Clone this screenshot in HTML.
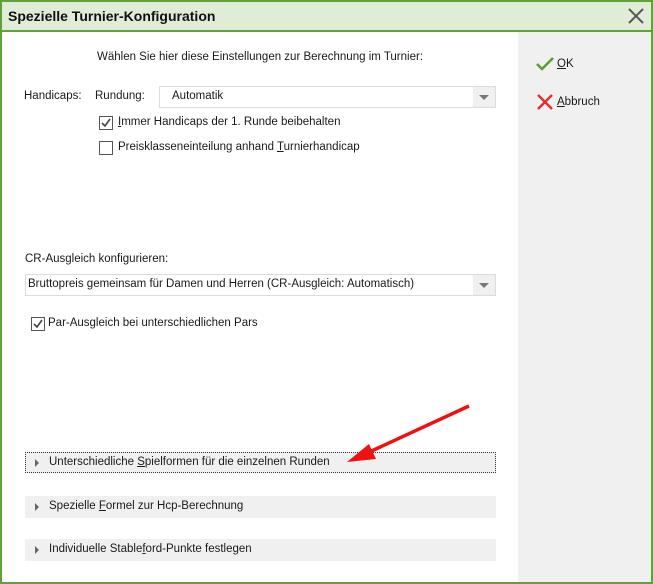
<!DOCTYPE html>
<html><head><meta charset="utf-8"><style>
*{margin:0;padding:0;box-sizing:border-box}
body{width:653px;height:584px;overflow:hidden;background:#fff;font-family:"Liberation Sans",sans-serif;font-size:11.5px;color:#1a1a1a;position:relative}
.frame{position:absolute;left:0;top:0;width:653px;height:584px;border:2px solid #5fa23a}
.title{position:absolute;left:2px;top:2px;width:649px;height:30px;background:#dfedd6;border-bottom:2px solid #5fa23a}
.title span{position:absolute;left:6px;top:6px;font-weight:bold;font-size:14px;color:#111}
.side{position:absolute;left:518px;top:32px;width:133px;height:550px;background:#f0f0f0}
.a{position:absolute;white-space:nowrap}
.combo{position:absolute;height:22px;border:1px solid #dcdcdc;background:#fff}
.combo span{position:absolute;left:12px;top:4px}
.combo i{position:absolute;right:0;top:0;width:22px;height:20px;background:#f0f0f0}
.combo i:after{content:"";position:absolute;left:6px;top:8px;border-left:5px solid transparent;border-right:5px solid transparent;border-top:5px solid #777}
.cb{position:absolute;width:14px;height:14px;border:1px solid #555;background:#fff}
.exp{position:absolute;left:25px;width:471px;height:22px;background:#f0f0f0}
.exp b{position:absolute;left:10px;top:7px;border-top:4px solid transparent;border-bottom:4px solid transparent;border-left:4px solid #666}
.exp span{position:absolute;left:24px;top:4px}
u{text-decoration:underline}
</style></head><body>
<div class="frame"></div>
<div class="title"><span>Spezielle Turnier-Konfiguration</span>
<svg style="position:absolute;left:625px;top:5px" width="18" height="18"><path d="M2 2L16 16M16 2L2 16" stroke="#555" stroke-width="2"/></svg></div>
<div class="side"></div>
<svg style="position:absolute;left:536px;top:57px" width="18" height="14"><path d="M1 7L6 12L17 1" stroke="#5a9e2f" stroke-width="2.5" fill="none"/></svg>
<div class="a" style="left:557px;top:58px"><u>O</u>K</div>
<svg style="position:absolute;left:537px;top:94px" width="16" height="16"><path d="M1 1L15 15M15 1L1 15" stroke="#e23030" stroke-width="2.5"/></svg>
<div class="a" style="left:557px;top:96px"><u>A</u>bbruch</div>

<div class="a" style="left:97px;top:51px">Wählen Sie hier diese Einstellungen zur Berechnung im Turnier:</div>
<div class="a" style="left:24px;top:90px">Handicaps:</div>
<div class="a" style="left:95px;top:90px">Rundung:</div>
<div class="combo" style="left:159px;top:86px;width:337px"><span style="top:3px">Automatik</span><i></i></div>
<div class="cb" style="left:99px;top:116px"></div>
<svg style="position:absolute;left:100px;top:117px" width="12" height="12"><path d="M2 6L5 9L10 2" stroke="#444" stroke-width="1.6" fill="none"/></svg>
<div class="a" style="left:118px;top:116px"><u>I</u>mmer Handicaps der 1. Runde beibehalten</div>
<div class="cb" style="left:99px;top:141px"></div>
<div class="a" style="left:118px;top:141px">Preisklasseneinteilung anhand <u>T</u>urnierhandicap</div>

<div class="a" style="left:25px;top:253px">CR-Ausgleich konfigurieren:</div>
<div class="combo" style="left:25px;top:274px;width:471px"><span style="left:2px;top:3px">Bruttopreis gemeinsam für Damen und Herren (CR-Ausgleich: Automatisch)</span><i></i></div>
<div class="cb" style="left:31px;top:317px"></div>
<svg style="position:absolute;left:32px;top:318px" width="12" height="12"><path d="M2 6L5 9L10 2" stroke="#444" stroke-width="1.6" fill="none"/></svg>
<div class="a" style="left:48px;top:317px">Par-Ausgleich bei unterschiedlichen Pars</div>

<div class="exp" style="top:452px;height:21px;border:1px dotted #333"><b style="left:9px;top:6px"></b><span style="left:23px;top:3px">Unterschiedliche <u>S</u>pielformen für die einzelnen Runden</span></div>
<div class="exp" style="top:496px"><b></b><span>Spezielle <u>F</u>ormel zur Hcp-Berechnung</span></div>
<div class="exp" style="top:539px"><b></b><span>Individuelle Stable<u>f</u>ord-Punkte festlegen</span></div>

<svg style="position:absolute;left:0;top:0" width="653" height="584"><line x1="469" y1="406" x2="365" y2="454" stroke="#f01010" stroke-width="3.5"/><polygon points="347,462 369,444 376,459" fill="#f01010"/></svg>
</body></html>
